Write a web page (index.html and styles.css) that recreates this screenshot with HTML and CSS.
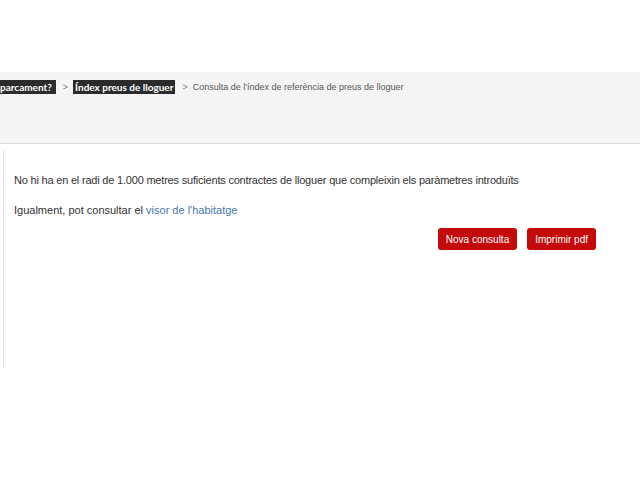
FILE: index.html
```html
<!DOCTYPE html>
<html>
<head>
<meta charset="utf-8">
<link rel="stylesheet" href="styles.css">
</head>
<body>
<div class="top"></div>
<div class="crumbbar">
  <div class="crumbs">
    <span class="tag tag-first">parcament?</span>
    <span class="sep">&gt;</span>
    <span class="tag">Índex preus de lloguer</span>
    <span class="sep">&gt;</span>
    <span class="current">Consulta de l'índex de referència de preus de lloguer</span>
  </div>
</div>
<div class="content">
  <p class="msg msg-tight">No hi ha en el radi de 1.000 metres suficients contractes de lloguer que compleixin els paràmetres introduïts</p>
  <p class="msg">Igualment, pot consultar el <a class="link" href="#">visor de l'habitatge</a></p>
  <div class="actions">
    <button class="btn">Nova consulta</button>
    <button class="btn">Imprimir pdf</button>
  </div>
</div>
</body>
</html>
```
FILE: styles.css
```css
html, body {
  margin: 0;
  padding: 0;
  background: #fff;
  font-family: "Liberation Sans", Arial, sans-serif;
}
.top {
  height: 72px;
}
.crumbbar {
  height: 71px;
  background: #f5f5f5;
  border-bottom: 1px solid #dcdcdc;
}
.crumbs {
  display: flex;
  align-items: center;
  padding-top: 8px;
}
.tag {
  background: #2b2b2b;
  color: #fff;
  font-family: Lato, "Liberation Sans", sans-serif;
  font-weight: bold;
  font-size: 10px;
  padding: 1px 2px;
  line-height: 12px;
}
.tag-first {
  padding-left: 0;
  padding-right: 4px;
}
.sep {
  color: #777;
  margin: 0 5px 0 7px;
  font-size: 9px;
}
.current {
  color: #555;
  font-size: 9px;
}
.content {
  margin: 6px 0 0 3px;
  border-left: 1px solid #e4e4e4;
  height: 195px;
  padding: 24px 0 0 10px;
  width: 582px;
}
.msg {
  margin: 0 0 17px;
  font-size: 11px;
  color: #333;
  line-height: 13px;
}
.msg-tight {
  letter-spacing: -0.2px;
}
.link {
  color: #4677a8;
  text-decoration: none;
}
.actions {
  display: flex;
  justify-content: flex-end;
  gap: 10px;
  margin-top: -6px;
}
.btn {
  background: #c40a0a;
  color: #fff;
  border: none;
  border-radius: 3px;
  font-family: "Liberation Sans", Arial, sans-serif;
  font-size: 10px;
  height: 22px;
  padding: 0 8px;
}
```
